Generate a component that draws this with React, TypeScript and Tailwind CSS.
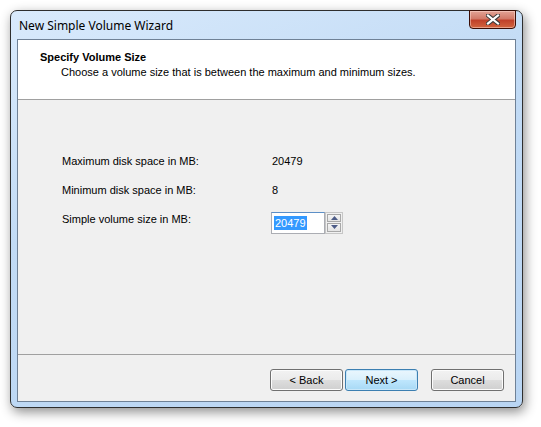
import React from "react";

const dlgFont = { fontFamily: '"Liberation Sans", Arial, sans-serif' };

const WinButton = ({ label, primary }: { label: string; primary?: boolean }) => (
  <button
    className={
      primary
        ? "w-[73px] h-[22px] rounded-[3px] border border-[#3c7fb1] bg-[linear-gradient(#eaf6fd_0%,#d9f0fc_48%,#bee6fd_52%,#a7d9f5_100%)] text-[11px] text-black shadow-[inset_0_0_0_1px_#c9e7f9]"
        : "w-[73px] h-[22px] rounded-[3px] border border-[#707070] bg-[linear-gradient(#f2f2f2_0%,#ebebeb_48%,#dddddd_52%,#cfcfcf_100%)] text-[11px] text-black shadow-[inset_0_0_0_1px_#fcfcfc]"
    }
    style={dlgFont}
  >
    {label}
  </button>
);

const Row = ({ label, children }: { label: string; children: React.ReactNode }) => (
  <div className="flex items-center h-[22px]">
    <span className="w-[210px]">{label}</span>
    {children}
  </div>
);

export default function App() {
  return (
    <div className="w-[541px] h-[427px] bg-white pt-[10px] pl-[10px]">
      <div className="w-[513px] h-[398px] rounded-[7px] border border-[#2e2e2e] bg-[linear-gradient(160deg,#d9eafc_0%,#c2dbf5_40%,#b9d5f3_100%)] shadow-[2px_4px_12px_rgba(0,0,0,0.45)] flex flex-col px-[6px] pb-[5px]">
        <div className="h-[28px] flex justify-between">
          <span
            className="pl-[2px] pt-[7px] text-[12px] text-black leading-[16px]"
            style={{ fontFamily: '"Noto Sans", "Open Sans", sans-serif' }}
          >
            New Simple Volume Wizard
          </span>
          <div className="w-[47px] h-[19px] -mt-px rounded-b-[4px] border border-[#3a0d05] bg-[linear-gradient(#e3a396_0%,#d27a69_45%,#c0412a_55%,#d2653f_100%)] shadow-[inset_0_0_0_1px_rgba(255,220,210,0.5)] flex items-center justify-center">
            <svg width="14" height="11" viewBox="0 0 14 11">
              <path
                d="M2 1.5 L12 9.5 M12 1.5 L2 9.5"
                stroke="#3a3a3a"
                strokeWidth="4.2"
                strokeLinecap="square"
              />
              <path
                d="M2 1.5 L12 9.5 M12 1.5 L2 9.5"
                stroke="#ffffff"
                strokeWidth="2.2"
                strokeLinecap="square"
              />
            </svg>
          </div>
        </div>
        <div className="flex-1 border border-[#6f8196] bg-[#f0f0f0] flex flex-col text-[11px] text-black" style={dlgFont}>
          <div className="h-[60px] bg-white border-b border-[#a0a0a0] pl-[22px] pt-[10px]">
            <div className="font-bold leading-[14px]">Specify Volume Size</div>
            <div className="pl-[21px] pt-[1px] leading-[14px]">
              Choose a volume size that is between the maximum and minimum sizes.
            </div>
          </div>
          <div className="flex-1 border-b border-[#a0a0a0] pl-[44px] pt-[50px] flex flex-col gap-[7px]">
            <Row label="Maximum disk space in MB:">
              <span>20479</span>
            </Row>
            <Row label="Minimum disk space in MB:">
              <span>8</span>
            </Row>
            <Row label="Simple volume size in MB:">
              <div className="flex h-[22px] -ml-px mt-[7px]">
                <div className="w-[54px] h-[22px] bg-white border border-[#abadb3] border-t-[#5c8fc7] pl-[2px] flex items-center">
                  <span className="bg-[#3399ff] text-white leading-[14px] px-px">20479</span>
                </div>
                <div className="w-[18px] h-[22px] border border-[#c6c6c6] bg-[#f0f0f0] flex flex-col p-px gap-px">
                  <div className="flex-1 border border-[#a8a8a8] bg-[linear-gradient(#f4f4f4,#e4e4e4)] flex items-center justify-center">
                    <svg width="7" height="4" viewBox="0 0 7 4">
                      <path d="M0 4 L3.5 0 L7 4 Z" fill="#4d5c87" />
                    </svg>
                  </div>
                  <div className="flex-1 border border-[#a8a8a8] bg-[linear-gradient(#f4f4f4,#e4e4e4)] flex items-center justify-center">
                    <svg width="7" height="4" viewBox="0 0 7 4">
                      <path d="M0 0 L7 0 L3.5 4 Z" fill="#4d5c87" />
                    </svg>
                  </div>
                </div>
              </div>
            </Row>
          </div>
          <div className="h-[46px] flex justify-end items-start pt-[14px] pr-[11px]">
            <WinButton label="< Back" />
            <div className="ml-[2px]">
              <WinButton label="Next >" primary />
            </div>
            <div className="ml-[13px]">
              <WinButton label="Cancel" />
            </div>
          </div>
        </div>
      </div>
    </div>
  );
}
